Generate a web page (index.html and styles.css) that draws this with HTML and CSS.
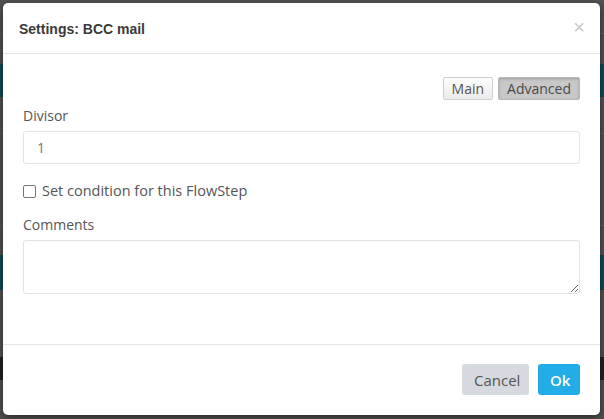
FILE: index.html
```html
<!DOCTYPE html>
<html>
<head>
<meta charset="utf-8">
<link rel="stylesheet" href="styles.css">
</head>
<body>
<div class="backdrop">
  <div class="bg-gap g1"></div>
  <div class="bg-line"></div>
  <div class="bg-gap g2"></div>
  <div class="bg-teal t1"></div>
  <div class="bg-gap g3"></div>
  <div class="bg-line"></div>
  <div class="bg-gap g4"></div>
  <div class="bg-line"></div>
  <div class="bg-gap g5"></div>
  <div class="bg-teal t2"></div>
  <div class="bg-gap g6"></div>
  <div class="bg-dark"></div>
</div>
<div class="modal">
  <div class="modal-header">
    <h4 class="modal-title">Settings: BCC mail</h4>
    <span class="close">×</span>
  </div>
  <div class="modal-body">
    <div class="tabs">
      <button class="tab">Main</button>
      <button class="tab active">Advanced</button>
    </div>
    <label class="label">Divisor</label>
    <input class="input" type="text" value="1">
    <label class="check"><span class="box"></span>Set condition for this FlowStep</label>
    <label class="label">Comments</label>
    <textarea class="textarea"></textarea>
  </div>
  <div class="modal-footer">
    <button class="btn btn-cancel">Cancel</button>
    <button class="btn btn-ok">Ok</button>
  </div>
</div>
</body>
</html>
```
FILE: styles.css
```css
* { box-sizing: border-box; }
html, body { margin: 0; padding: 0; }
body {
  width: 604px;
  height: 419px;
  overflow: hidden;
  background: #525252;
  font-family: "Open Sans", "Liberation Sans", sans-serif;
  position: relative;
}
.backdrop { display: flex; flex-direction: column; }
.bg-line { height: 1px; background: #5c5c5c; }
.g1 { height: 33px; }
.g2 { height: 30px; }
.bg-teal { height: 33px; background: #0f4a59; }
.t2 { height: 35px; }
.g3 { height: 36px; }
.g4 { height: 91px; }
.g5 { height: 29px; }
.g6 { height: 67px; }
.bg-dark { height: 23px; background: #1f2326; }

.modal {
  position: absolute;
  left: 3px;
  top: 3px;
  width: 597px;
  height: 412px;
  background: #fff;
  border-radius: 5px;
  box-shadow: 0 3px 9px rgba(0,0,0,0.5);
  display: flex;
  flex-direction: column;
}
.modal-header {
  height: 51px;
  padding: 0 16px;
  border-bottom: 1px solid #e5e5e5;
  display: flex;
  align-items: center;
  justify-content: space-between;
}
.modal-title {
  margin: 0;
  font-family: "Liberation Sans", Arial, sans-serif;
  font-weight: bold;
  font-size: 14px;
  color: #3a3a3a;
  padding-top: 2px;
}
.close {
  font-family: "Liberation Sans", Arial, sans-serif;
  font-size: 20px;
  color: #c8c8c8;
  line-height: 1;
  margin-right: -1px;
  margin-top: -3px;
}
.modal-body {
  flex: 1;
  padding: 23px 20px 0 20px;
  display: flex;
  flex-direction: column;
}
.tabs {
  display: flex;
  justify-content: flex-end;
  gap: 5px;
  margin-bottom: 6px;
}
.tab {
  font-family: "Open Sans", sans-serif;
  font-size: 14px;
  color: #555;
  height: 23px;
  padding: 0 8px;
  border: 1px solid #cfcfcf;
  background: linear-gradient(#fdfdfd, #ebebeb);
  border-radius: 2px;
  line-height: 20px;
}
.tab.active {
  background: #c8c8c8;
  border-color: #b8b8b8;
  box-shadow: inset 0 1px 3px rgba(0,0,0,0.2);
  color: #4a4a4a;
}
.label {
  font-size: 14px;
  color: #555;
  line-height: 20px;
  margin-bottom: 5px;
}
.input {
  height: 33px;
  border: 1px solid #e3e3e3;
  border-radius: 3px;
  padding: 0 13px;
  font-family: "Open Sans", sans-serif;
  font-size: 14px;
  color: #777;
  outline: none;
  margin: 0;
}
.check {
  display: flex;
  align-items: center;
  gap: 6px;
  font-size: 14.5px;
  color: #555;
  margin: 17px 0 14px 0;
  line-height: 20px;
}
.box {
  width: 13px;
  height: 13px;
  border: 1px solid #767676;
  border-radius: 2px;
  background: #fff;
}
.textarea {
  height: 54px;
  border: 1px solid #e3e3e3;
  border-radius: 3px;
  resize: vertical;
  margin: 0;
  font-family: "Open Sans", sans-serif;
}
.modal-footer {
  border-top: 1px solid #e5e5e5;
  padding: 19px 20px 20px 20px;
  display: flex;
  justify-content: flex-end;
  gap: 9px;
}
.btn {
  font-family: "Open Sans", sans-serif;
  font-size: 15px;
  height: 31px;
  border: none;
  border-radius: 3px;
  padding: 0 12px;
}
.btn-cancel { background: #d6d9e0; color: #555; width: 67px; }
.btn-ok { background: #22ade6; color: #fff; width: 42px; font-weight: 600; }
```
